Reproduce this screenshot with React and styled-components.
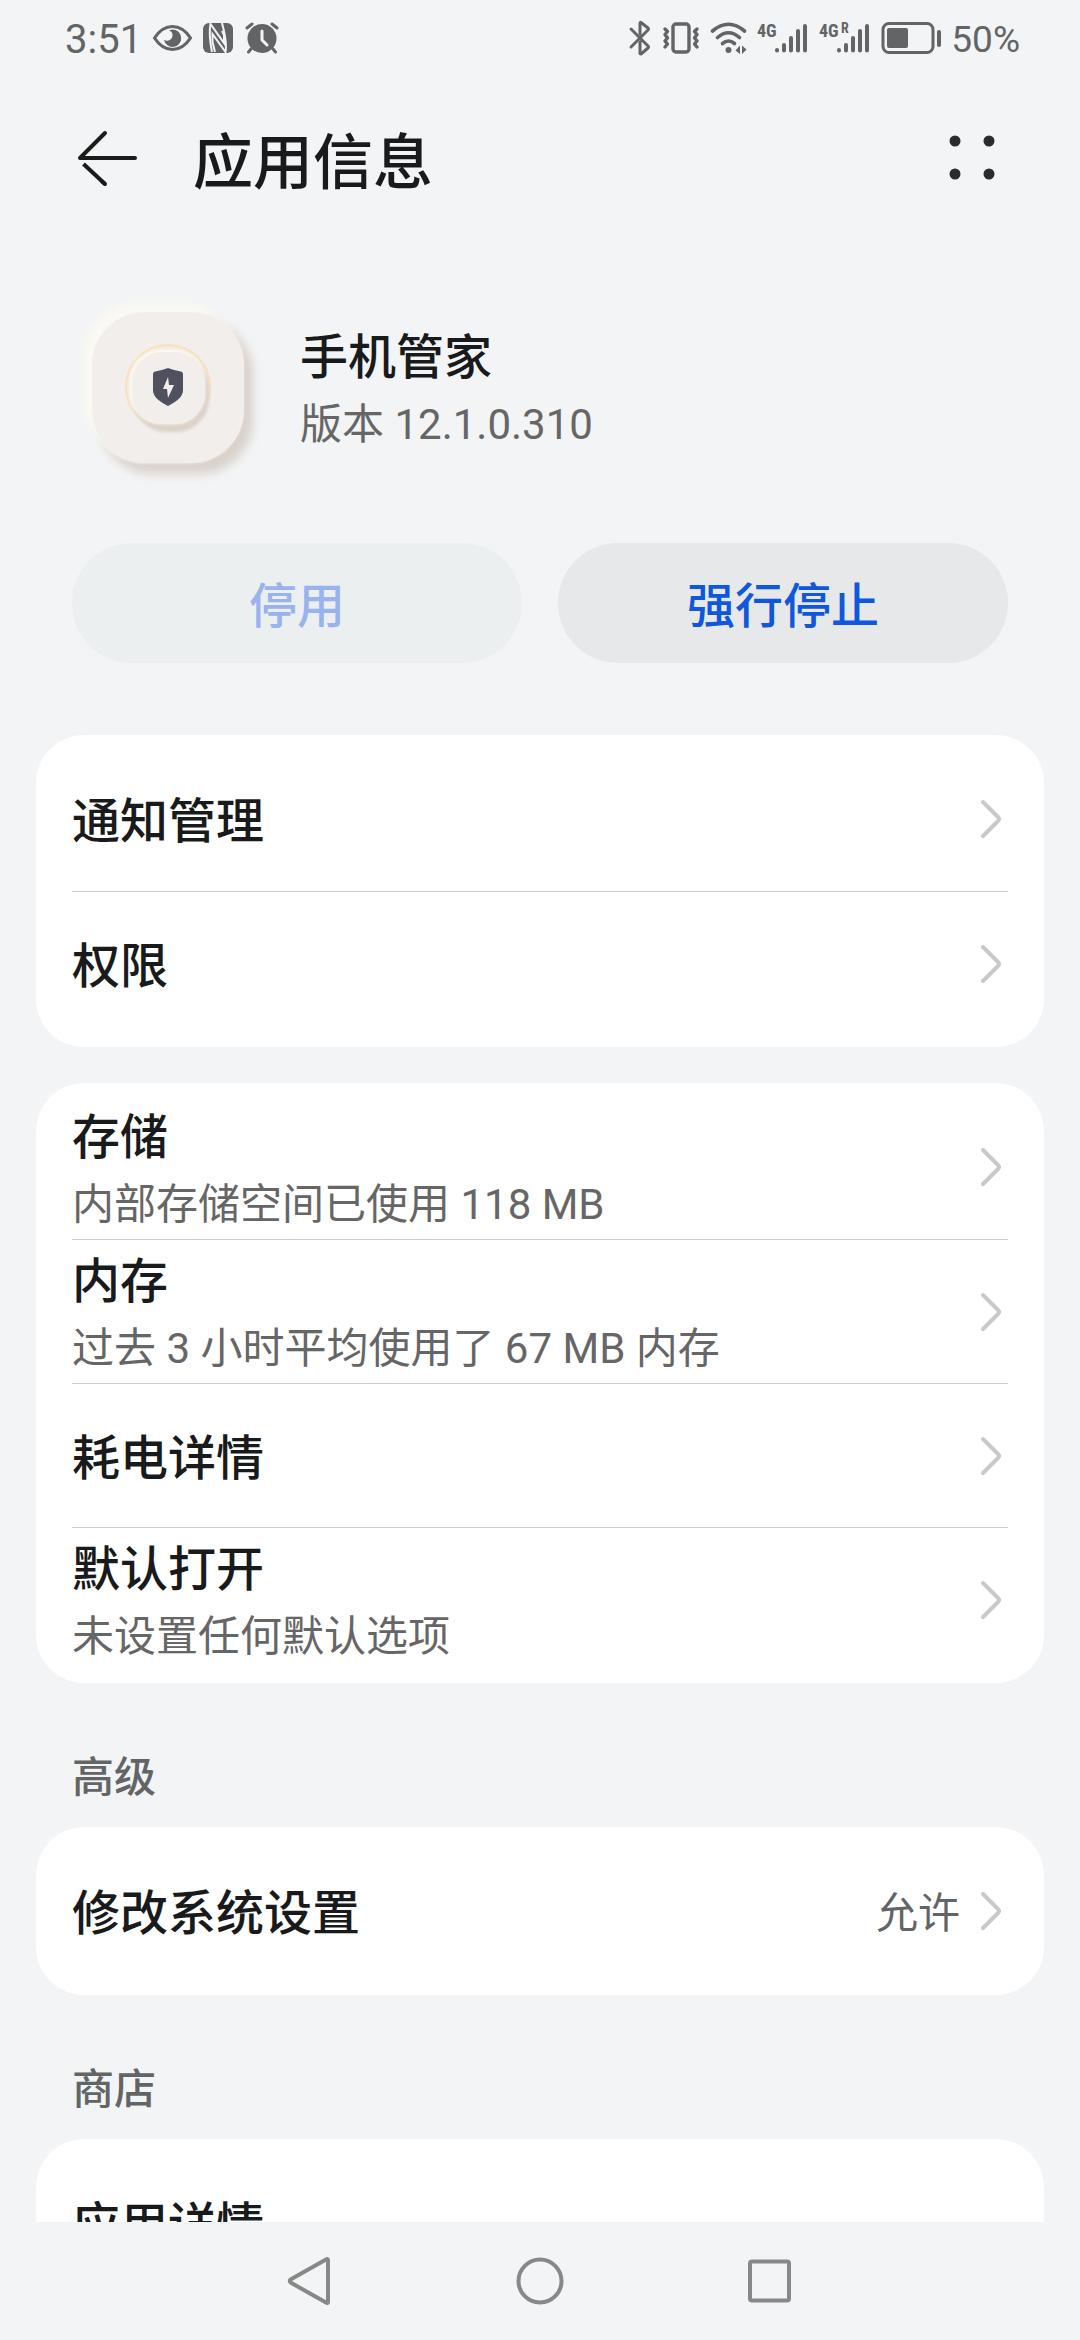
import styled, { createGlobalStyle } from "styled-components";

const appSections = [
  {
    rows: [{ title: "通知管理" }, { title: "权限" }],
  },
  {
    rows: [
      { title: "存储", detail: "内部存储空间已使用 118 MB" },
      { title: "内存", detail: "过去 3 小时平均使用了 67 MB 内存" },
      { title: "耗电详情" },
      { title: "默认打开", detail: "未设置任何默认选项" },
    ],
  },
  {
    heading: "高级",
    rows: [{ title: "修改系统设置", value: "允许" }],
  },
  {
    heading: "商店",
    rows: [{ title: "应用详情", plain: true }],
  },
];

export default function App() {
  return (
    <>
      <GlobalStyle />
      <Screen>
        <StatusBar />
        <TitleBar>
          <IconButton aria-label="返回">
            <BackIcon />
          </IconButton>
          <PageTitle>应用信息</PageTitle>
          <IconButton aria-label="更多">
            <MoreIcon />
          </IconButton>
        </TitleBar>

        <Content>
          <AppSummary>
            <AppIcon />
            <TextBlock>
              <Label as="h2">手机管家</Label>
              <Detail>版本 12.1.0.310</Detail>
            </TextBlock>
          </AppSummary>

          <Actions>
            <ActionButton disabled>停用</ActionButton>
            <ActionButton>强行停止</ActionButton>
          </Actions>

          {appSections.map((section) => (
            <Section key={section.rows[0].title}>
              {section.heading && <SectionHeading>{section.heading}</SectionHeading>}
              <Card>
                {section.rows.map((row) => (
                  <Row key={row.title}>
                    <TextBlock>
                      <Label>{row.title}</Label>
                      {row.detail && <Detail>{row.detail}</Detail>}
                    </TextBlock>
                    {row.value && <Value>{row.value}</Value>}
                    {!row.plain && <Chevron />}
                  </Row>
                ))}
              </Card>
            </Section>
          ))}
        </Content>

        <NavBar />
      </Screen>
    </>
  );
}

function StatusBar() {
  return (
    <StatusRow>
      <StatusGroup>
        <Clock>3:51</Clock>
        <EyeIcon />
        <NfcIcon />
        <AlarmIcon />
      </StatusGroup>
      <StatusGroup>
        <BluetoothIcon />
        <VibrateIcon />
        <WifiIcon />
        <SignalIcon />
        <SignalIcon roaming />
        <BatteryIcon level={50} />
        <Percent>50%</Percent>
      </StatusGroup>
    </StatusRow>
  );
}

function NavBar() {
  return (
    <NavRow>
      <NavButton aria-label="后退">
        <svg width="48" height="54" viewBox="0 0 48 54" fill="none" stroke="#888" strokeWidth="4" strokeLinejoin="round">
          <path d="M42 6.5V47.5Q42 50 40 48.5L5 28.8Q2.5 27 5 25.2L40 5.500Q42 4 42 6.500Z" />
        </svg>
      </NavButton>
      <NavButton aria-label="主屏幕">
        <svg width="48" height="48" viewBox="0 0 48 48" fill="none" stroke="#888" strokeWidth="4">
          <circle cx="24" cy="24" r="21.5" />
        </svg>
      </NavButton>
      <NavButton aria-label="最近任务">
        <svg width="48" height="48" viewBox="0 0 48 48" fill="none" stroke="#888" strokeWidth="4">
          <rect x="4" y="4.500" width="39" height="39" rx="2" />
        </svg>
      </NavButton>
    </NavRow>
  );
}

function BackIcon() {
  return (
    <svg width="72" height="72" viewBox="0 0 72 72" fill="none" stroke="#1a1c1c" strokeWidth="4" strokeLinecap="round" strokeLinejoin="round">
      <path d="M63 36H8L33 11" />
      <path d="M11.500 42L33 62" strokeLinecap="butt" />
      <path d="M30 59.500L33 62" />
    </svg>
  );
}

function MoreIcon() {
  return (
    <svg width="72" height="72" viewBox="0 0 72 72" fill="#2b2d2d">
      <circle cx="19" cy="19" r="5.500" />
      <circle cx="53" cy="19" r="5.500" />
      <circle cx="19" cy="52" r="5.500" />
      <circle cx="53" cy="52" r="5.500" />
    </svg>
  );
}

function AppIcon() {
  return (
    <svg width="192" height="192" viewBox="0 0 192 192">
      <defs>
        <filter id="soft" x="-30%" y="-30%" width="160%" height="160%">
          <feGaussianBlur stdDeviation="5" />
        </filter>
        <filter id="softSmall" x="-30%" y="-30%" width="160%" height="160%">
          <feGaussianBlur stdDeviation="1.5" />
        </filter>
        <linearGradient id="ring" x1="0" y1="0" x2="0" y2="1">
          <stop offset="0" stopColor="#fbe0b8" />
          <stop offset="1" stopColor="#f6e0c4" />
        </linearGradient>
      </defs>
      <rect x="12" y="13" width="150" height="150" rx="52" fill="#fbf9f3" filter="url(#soft)" />
      <rect x="27" y="29" width="154" height="154" rx="54" fill="#d9d2cc" filter="url(#soft)" />
      <rect x="19" y="20" width="152" height="152" rx="53" fill="#fbf9f5" filter="url(#softSmall)" />
      <rect x="20" y="21" width="152" height="151" rx="53" fill="#f1eeeb" />
      <circle cx="96" cy="96" r="42" fill="#f3ebe2" stroke="url(#ring)" strokeWidth="2" />
      <rect x="61" y="64" width="76" height="77" rx="33" fill="#dcd2c9" filter="url(#softSmall)" />
      <rect x="58" y="59" width="75" height="74" rx="31" fill="#fffbf2" filter="url(#softSmall)" />
      <rect x="60" y="61" width="73" height="72" rx="30" fill="#f1eeec" />
      <path d="M96 77C101 79 106 80 109 80.500Q111 81 111 83V99C111 107 103 111 96 115C89 111 81 107 81 99V83Q81 81 83 80.500C86 80 91 79 96 77Z" fill="#50515f" />
      <path d="M96 86L91 98H95L96 107L102 94H97Z" fill="#f1eeec" />
    </svg>
  );
}

function Chevron() {
  return (
    <svg width="36" height="48" viewBox="0 0 36 48" fill="none" stroke="#c9c9c9" strokeWidth="4" strokeLinecap="round" strokeLinejoin="round">
      <path d="M11 7L26 22Q28 24 26 26L11 41" />
    </svg>
  );
}

function EyeIcon() {
  return (
    <svg width="40" height="32" viewBox="0 0 40 32">
      <path d="M2.500 16Q10 4.500 20.500 4.500T38.500 16Q31 27.500 20.500 27.500T2.500 16Z" fill="none" stroke="#626466" strokeWidth="3.200" strokeLinejoin="round" />
      <path d="M20.500 7.500A8.700 8.700 0 1 1 12 18C15 20 20 18 20.500 14C21 11 19 9 17 8.500Z" fill="#626466" />
    </svg>
  );
}

function NfcIcon() {
  return (
    <svg width="32" height="32" viewBox="0 0 32 32">
      <rect x="1" y="1" width="30" height="30" rx="6" fill="#626466" />
      <path d="M10 30C8 20 7 10 8.500 2L22 21V13L20 9" fill="none" stroke="#f2f4f5" strokeWidth="2" />
      <path d="M20 1C23 12 25 22 23.500 30L10.500 12V20L13 30" fill="none" stroke="#f2f4f5" strokeWidth="2" />
    </svg>
  );
}

function AlarmIcon() {
  return (
    <svg width="36" height="32" viewBox="0 0 36 32" fill="none" stroke="#626466" strokeLinecap="round">
      <circle cx="18" cy="16.500" r="14.500" fill="#626466" stroke="none" />
      <path d="M3 6L8 2M33 6L28 2" strokeWidth="3" />
      <path d="M7 27L4.500 30M29 27L31.500 30" strokeWidth="3" />
      <path d="M18 9V18L23 23" stroke="#f2f4f5" strokeWidth="3" strokeLinejoin="round" />
    </svg>
  );
}

function BluetoothIcon() {
  return (
    <svg width="24" height="36" viewBox="0 0 24 36" fill="none" stroke="#626466" strokeWidth="3" strokeLinecap="round" strokeLinejoin="round">
      <path d="M3 9L20 26Q21 27 20 28L13 34Q12 34 12 33V22" />
      <path d="M3 27L20 10Q21 9 20 8L13 2.500Q12 2 12 3.500V14" />
    </svg>
  );
}

function VibrateIcon() {
  return (
    <svg width="38" height="32" viewBox="0 0 38 32" fill="none" stroke="#626466" strokeWidth="3.400" strokeLinecap="round" strokeLinejoin="round">
      <rect x="11" y="2" width="16" height="28" rx="3" />
      <path d="M3 7L5.500 9.500L3 12.500L5.500 16L3 19L5.500 22L3 25" />
      <path d="M35 7L32.500 9.500L35 12.500L32.500 16L35 19L32.500 22L35 25" />
    </svg>
  );
}

function WifiIcon() {
  return (
    <svg width="37" height="32" viewBox="0 0 37 32" fill="none" stroke="#626466" strokeWidth="3.600" strokeLinecap="round">
      <path d="M2.500 9Q18.500 -4.500 34.500 9" />
      <path d="M7.500 15.500Q18.500 6 29.500 15.500" />
      <path d="M12.500 21.500Q18.500 16.500 24.500 21.500" />
      <circle cx="18.500" cy="28" r="3" fill="#626466" stroke="none" />
      <path d="M30 23.500V32L25.500 28.500ZM32 23.500V32L36.500 27.500Z" fill="#626466" stroke="none" />
    </svg>
  );
}

function SignalIcon({ roaming = false }) {
  return (
    <Signal width="52" height="32" viewBox="0 0 52 32" fill="#626466">
      <NetworkText x="0" y="15">4G</NetworkText>
      {roaming && (
        <NetworkText x="22" y="11" $small>
          R
        </NetworkText>
      )}
      <g stroke="#626466" strokeWidth="4" strokeLinecap="round">
        <path d="M20 28V28.500M27 23V28.500M34 16V28.500M41 9V28.500M48 4V28.500" />
      </g>
    </Signal>
  );
}

function BatteryIcon({ level }) {
  return (
    <svg width="60" height="34" viewBox="0 0 60 34" fill="#626466">
      <rect x="2" y="2.500" width="50" height="29" rx="6" fill="none" stroke="#626466" strokeWidth="3" />
      <rect x="6" y="7" width={(42 * level) / 100} height="20" rx="2" />
      <rect x="56" y="9" width="4" height="17" rx="2" />
    </svg>
  );
}

const GlobalStyle = createGlobalStyle`
  * {
    box-sizing: border-box;
    margin: 0;
  }

  body {
    background: #f2f4f5;
    color: #191a1b;
    font-family: "Noto Sans CJK SC", "Noto Sans", sans-serif;
  }

  button {
    border: 0;
    padding: 0;
    background: none;
    color: inherit;
    font: inherit;
    cursor: pointer;
  }

  svg {
    display: block;
    flex-shrink: 0;
  }
`;

const Screen = styled.div`
  display: flex;
  flex-direction: column;
  height: 100vh;
`;

const StatusRow = styled.div`
  display: flex;
  flex-shrink: 0;
  align-items: center;
  justify-content: space-between;
  height: 76px;
  padding: 0 60px 0 65px;
  color: #626466;
  font-family: Roboto, sans-serif;
`;

const StatusGroup = styled.div`
  display: flex;
  align-items: center;
  gap: 10px;
`;

const Clock = styled.span`
  padding-top: 4px;
  font-size: 40px;
  line-height: 48px;
`;

const Percent = styled(Clock)`
  font-size: 37px;
`;

const Signal = styled.svg`
  overflow: visible;
`;

const NetworkText = styled.text`
  font-family: "Liberation Sans Narrow", "Roboto Condensed", Roboto, sans-serif;
  font-size: ${({ $small }) => ($small ? 14 : 18)}px;
  font-weight: 700;
`;

const TitleBar = styled.header`
  display: flex;
  flex-shrink: 0;
  align-items: center;
  gap: 49px;
  height: 164px;
  padding: 0 72px;
`;

const IconButton = styled.button`
  display: flex;
`;

const PageTitle = styled.h1`
  flex: 1;
  font-size: 60px;
  font-weight: 500;
  line-height: 72px;
`;

const Content = styled.main`
  flex: 1;
  min-height: 0;
  padding: 51px 36px 36px;
  overflow-y: auto;
  scrollbar-width: none;
`;

const AppSummary = styled.section`
  display: flex;
  align-items: center;
  gap: 36px;
  padding: 0 36px;
`;

const TextBlock = styled.div`
  display: flex;
  flex: 1;
  flex-direction: column;
  gap: 9px;
  padding-top: 6px;
  font-family: Roboto, "Noto Sans CJK SC", sans-serif;
  text-align: left;
`;

const Label = styled.span`
  font-size: 48px;
  font-weight: 500;
  line-height: 60px;
`;

const Detail = styled.span`
  color: #666;
  font-size: 42px;
  line-height: 56px;
`;

const Actions = styled.div`
  display: grid;
  grid-template-columns: 1fr 1fr;
  gap: 36px;
  padding: 60px 36px 36px;
`;

const ActionButton = styled.button`
  height: 120px;
  padding-bottom: 3px;
  border-radius: 60px;
  background: #e6e8e9;
  color: #0f57dc;
  font-size: 48px;
  font-weight: 500;

  &:disabled {
    background: #eceff0;
    color: #98b3ee;
    cursor: default;
  }
`;

const Section = styled.section`
  margin-top: 36px;

  &:has(h3) {
    margin-top: 0;
  }
`;

const SectionHeading = styled.h3`
  padding: 63px 36px 25px;
  color: #626466;
  font-size: 42px;
  font-weight: 500;
  line-height: 56px;
`;

const Card = styled.div`
  padding: 12px 36px;
  border-radius: 48px;
  background: #fff;
`;

const Row = styled.button`
  display: flex;
  align-items: center;
  gap: 12px;
  width: 100%;
  height: 144px;

  & + & {
    border-top: 1px solid #ccc;
  }
`;

const Value = styled.span`
  padding-bottom: 2px;
  color: #626466;
  font-size: 42px;
  line-height: 56px;
`;

const NavRow = styled.nav`
  display: flex;
  flex-shrink: 0;
  justify-content: center;
  height: 118px;
`;

const NavButton = styled.button`
  display: flex;
  align-items: center;
  justify-content: center;
  width: 230px;
`;
